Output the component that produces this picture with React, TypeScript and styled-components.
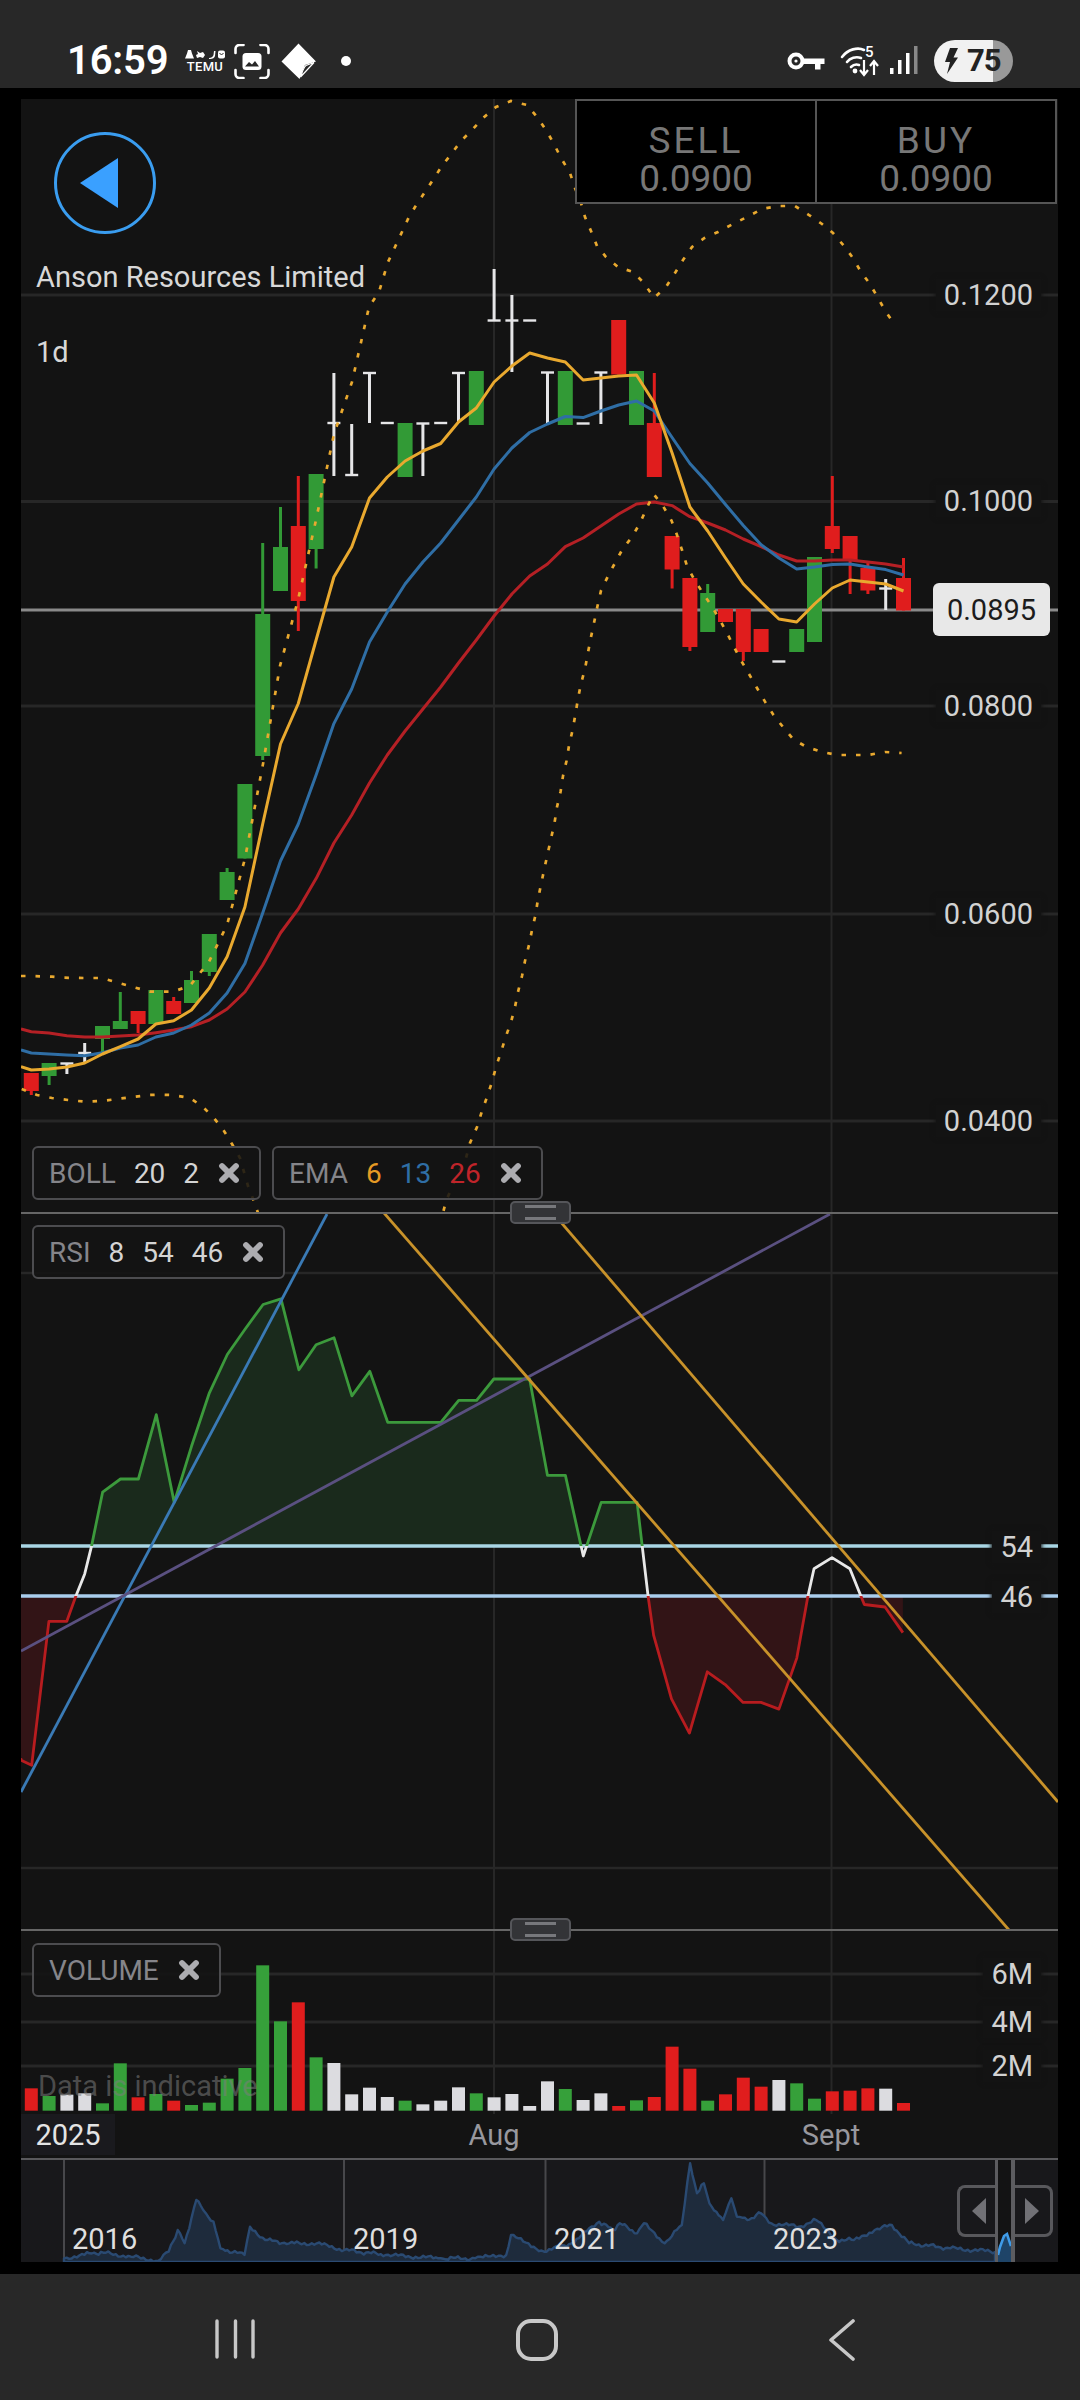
import React from 'react';
import styled, { createGlobalStyle } from 'styled-components';
import { X } from 'lucide-react';

const Global = createGlobalStyle`
  html, body { margin: 0; padding: 0; background: #000; }
  #root { width: 1080px; height: 2400px; }
  * { box-sizing: border-box; }
`;

const FONT = `Roboto, "Liberation Sans", sans-serif`;
const PANEL = '#131313';
const GRID = '#272727';
const ORANGE = '#e9a92f';
const BLUE = '#2f6ea5';
const RED = '#b52025';
const CANDLE_RED = '#e01d1d';
const CANDLE_GREEN = '#329a36';
const WHITE = '#e6e6e8';

const Page = styled.div`
  width: 1080px; height: 2400px; display: flex; flex-direction: column;
  background: #000; font-family: ${FONT}; overflow: hidden;
`;

/* ---------- status bar ---------- */
const StatusBar = styled.header`
  height: 88px; flex: none; background: #282828; display: flex; align-items: center;
  justify-content: space-between; padding: 34px 67px 0 67px; color: #fff;
`;
const StatusGroup = styled.div`display: flex; align-items: center;`;
const Slot = styled.div<{ $ml?: number }>`
  margin-left: ${p => p.$ml ?? 0}px; display: flex; flex-direction: column; align-items: center;
`;
const Time = styled.div`font-size: 40px; font-weight: 600; line-height: 40px; width: 101px; letter-spacing: -0.2px; white-space: nowrap;`;
const TemuText = styled.div`font-size: 13px; font-weight: 500; line-height: 11px; letter-spacing: 0.3px; margin-top: 1px;`;
const Battery = styled.div`
  margin-left: 16px; width: 79px; height: 42px; border-radius: 21px; display: flex; align-items: center;
  padding-left: 11px; gap: 9px; color: #222;
  background: linear-gradient(90deg, #f1f1f1 0, #f1f1f1 59px, #999 59px, #999 100%);
`;
const BatteryText = styled.span`font-size: 31px; font-weight: 700; line-height: 42px; letter-spacing: -1px;`;

/* ---------- chart frame ---------- */
const Frame = styled.main`
  flex: none; height: 2186px; padding: 11px 22px 12px 21px; display: flex; flex-direction: column; background: #000;
`;
const Panel = styled.section<{ $h: number }>`
  position: relative; flex: none; height: ${p => p.$h}px; width: 1037px; background: ${PANEL}; overflow: hidden;
`;
const ChartSvg = styled.svg`display: block; width: 100%; height: 100%;`;
const Divider = styled.div`position: relative; flex: none; height: 2px; width: 1037px; background: #666; z-index: 2;`;
const Handle = styled.div`
  position: absolute; left: 489px; top: -11px; width: 61px; height: 23px; background: #333437;
  border: 2px solid #55565a; border-radius: 5px; display: flex; align-items: center; justify-content: center;
  &::before { content: ''; width: 31px; height: 9px; border-top: 3px solid #77787c; border-bottom: 3px solid #77787c; }
`;

const AxisLabel = styled.div<{ $y: number }>`
  position: absolute; right: 17px; top: ${p => p.$y}px; transform: translateY(-50%);
  font-size: 29px; line-height: 32px; color: #d2d2d2; background: ${PANEL}; padding: 0 8px;
  box-shadow: 0 0 4px 1px ${PANEL};
`;
const LastPrice = styled.div<{ $y: number }>`
  position: absolute; left: 912px; top: ${p => p.$y}px; width: 117px; height: 53px; border-radius: 6px;
  background: #e8e8e8; color: #1c1c1c; font-size: 29px; display: flex; align-items: center; justify-content: center;
`;

const QuoteBox = styled.div`
  position: absolute; right: 1px; top: 0; width: 482px; height: 105px; display: flex; background: #000;
  border: 2px solid #555;
`;
const QuoteCell = styled.div`
  flex: 1; display: flex; flex-direction: column; align-items: center; justify-content: center; padding-top: 16px;
  color: #777; font-size: 37px; line-height: 38px; font-weight: 400;
  & + & { border-left: 2px solid #555; }
`;
const QuoteSide = styled.span`letter-spacing: 3px;`;
const BackButton = styled.div`
  position: absolute; left: 33px; top: 33px; width: 102px; height: 102px; border-radius: 50%;
  border: 3px solid #3a9df0; display: flex; align-items: center; justify-content: center;
`;
const BackArrow = styled.svg`display: block; margin-right: 12px;`;
const Title = styled.div<{ $y: number }>`
  position: absolute; left: 15px; top: ${p => p.$y}px; transform: translateY(-50%);
  font-size: 29px; line-height: 34px; color: #d8d8d8; white-space: nowrap;
`;

const ChipRow = styled.div<{ $y: number }>`
  position: absolute; left: 11px; top: ${p => p.$y}px; display: flex; gap: 11px;
`;
const Chip = styled.div`
  height: 54px; display: flex; align-items: center; gap: 18px; padding: 0 16px 0 15px;
  border: 2px solid #4c4c4f; border-radius: 6px; background: rgba(19, 19, 19, 0.88);
  font-size: 28px; color: #d4d4d4; white-space: nowrap;
`;
const ChipName = styled.span`color: #85858a;`;
const ChipValue = styled.span<{ $c?: string }>`color: ${p => p.$c ?? '#d4d4d4'};`;
const ChipClose = styled(X).attrs({ size: 28, strokeWidth: 5 })`color: #acacb0; margin-left: -2px;`;

const Indicative = styled.div`
  position: absolute; left: 17px; top: 139px; font-size: 29px; line-height: 32px; color: rgba(125, 125, 125, 0.55); white-space: nowrap;
`;

const TimeAxis = styled.div`
  position: relative; flex: none; height: 44px; width: 1037px; background: ${PANEL}; overflow: hidden;
`;
const YearCell = styled.div`
  position: absolute; left: 0; top: 0; width: 94px; height: 41px; background: #1a1a1e;
`;
const TimeLabel = styled.div<{ $x: number; $c: string }>`
  position: absolute; left: ${p => p.$x}px; top: 5px; transform: translateX(-50%);
  font-size: 29px; line-height: 32px; color: ${p => p.$c};
`;

const Navigator = styled.div`
  position: relative; flex: none; height: 104px; width: 1037px; background: #18181b; border-top: 2px solid #59595c; overflow: hidden;
`;
const NavYear = styled.div<{ $x: number }>`
  position: absolute; left: ${p => p.$x}px; top: 63px; font-size: 29px; line-height: 32px; color: #dfdfdf;
`;
const NavHandle = styled.div<{ $left: number; $side: 'l' | 'r' }>`
  position: absolute; left: ${p => p.$left}px; top: 25px; width: 40px; height: 52px;
  border: 3px solid #58585c; display: flex; align-items: center; justify-content: center;
  ${p => p.$side === 'l' ? 'border-right: none; border-radius: 8px 0 0 8px;' : 'border-left: none; border-radius: 0 8px 8px 0;'}
`;
const NavWindow = styled.div`
  position: absolute; left: 974px; top: -2px; width: 20px; height: 106px;
  border-left: 3px solid #5c5c60; border-right: 4px solid #5c5c60; background: rgba(19, 19, 19, 0.92);
`;
const NavWindowSvg = styled.svg`display: block; width: 100%; height: 100%;`;

/* ---------- navigation bar ---------- */
const NavBar = styled.nav`
  flex: none; height: 126px; background: #282828; display: flex; align-items: flex-start; padding: 45px 0 0 215px;
`;
const NavIcon = styled.svg<{ $mr: number }>`display: block; flex: none; margin-right: ${p => p.$mr}px;`;

/* ---------- data ---------- */
const X0 = 31.3;
const STEP = 17.8;
const cx = (i: number) => X0 + STEP * i;

type Candle = { c: 'g' | 'r'; t: number; b: number; h?: number; l?: number } | { c: 'w'; bar: number; h?: number; l?: number };
const candles: Candle[] = [
  { c: 'r', t: 1073, b: 1091, l: 1095 },
  { c: 'g', t: 1063, b: 1076, l: 1085 },
  { c: 'w', bar: 1063.5, h: 1063, l: 1074 },
  { c: 'w', bar: 1053, h: 1043, l: 1063 },
  { c: 'g', t: 1026, b: 1039, l: 1052 },
  { c: 'g', t: 1021, b: 1029, h: 992 },
  { c: 'r', t: 1011, b: 1024, l: 1033 },
  { c: 'g', t: 990, b: 1024 },
  { c: 'r', t: 1001, b: 1014, h: 997 },
  { c: 'g', t: 980, b: 1003, h: 971 },
  { c: 'g', t: 934, b: 972, l: 976 },
  { c: 'g', t: 872, b: 900, h: 868 },
  { c: 'g', t: 784, b: 858.5 },
  { c: 'g', t: 614, b: 756, h: 543, l: 760 },
  { c: 'g', t: 547, b: 591, h: 507 },
  { c: 'r', t: 526, b: 601, h: 476, l: 631 },
  { c: 'g', t: 474, b: 549, l: 568.5 },
  { c: 'w', bar: 423, h: 373, l: 476 },
  { c: 'w', bar: 475, h: 424, l: 476 },
  { c: 'w', bar: 373, h: 372, l: 423 },
  { c: 'w', bar: 423 },
  { c: 'g', t: 423, b: 477 },
  { c: 'w', bar: 423.5, h: 423, l: 476 },
  { c: 'w', bar: 423 },
  { c: 'w', bar: 373, h: 372, l: 423 },
  { c: 'g', t: 371, b: 425 },
  { c: 'w', bar: 320.5, h: 269, l: 321 },
  { c: 'w', bar: 320.5, h: 295, l: 372 },
  { c: 'w', bar: 320.5 },
  { c: 'w', bar: 372.5, h: 372, l: 423 },
  { c: 'g', t: 371, b: 425 },
  { c: 'w', bar: 423.5 },
  { c: 'w', bar: 372.5, h: 372, l: 424 },
  { c: 'r', t: 320, b: 374.5 },
  { c: 'g', t: 371, b: 425 },
  { c: 'r', t: 423, b: 477, h: 373 },
  { c: 'r', t: 536, b: 569.5, l: 588.5 },
  { c: 'r', t: 578, b: 647, l: 651 },
  { c: 'g', t: 593, b: 632, h: 584 },
  { c: 'r', t: 609, b: 622 },
  { c: 'r', t: 609, b: 652, l: 661 },
  { c: 'r', t: 629, b: 652 },
  { c: 'w', bar: 661.5 },
  { c: 'g', t: 629, b: 652 },
  { c: 'g', t: 557, b: 642 },
  { c: 'r', t: 526, b: 549, h: 476, l: 553 },
  { c: 'r', t: 536, b: 561, l: 594 },
  { c: 'r', t: 568, b: 590.5, h: 563, l: 594 },
  { c: 'w', bar: 588.5, h: 579, l: 610 },
  { c: 'r', t: 578, b: 610.5, h: 558 },
];

const ema6 = [1070, 1069, 1067, 1063, 1054, 1046.7, 1039, 1024, 1020.7, 1010, 988, 956.7, 907, 824, 744, 703.5, 640, 577, 547, 498, 477, 461, 451, 443.5, 422, 408, 382, 366, 353, 358, 362, 380, 378, 376, 375, 403, 453, 507, 531, 558, 584, 602, 619, 622, 604, 588, 580, 582, 584, 591];
const ema13 = [1053, 1054, 1055, 1055.7, 1052.7, 1048, 1045, 1037, 1033, 1025, 1013, 993, 963.5, 913, 861, 824, 775, 723.6, 689, 642, 612, 584, 562, 543, 520, 497, 469, 448, 432.5, 424, 416.5, 417.6, 411, 405, 401, 411, 437.5, 463.5, 483, 504.5, 525.5, 544.7, 558, 569, 567, 564.6, 564, 567, 569.6, 575];
const ema26 = [1031.7, 1033, 1035.7, 1037, 1037, 1036, 1035, 1032.7, 1030, 1026.7, 1020, 1009, 992, 965, 933, 909, 878.6, 843, 815, 783, 755, 731, 709, 687, 663, 640, 616, 594, 576, 564, 546.6, 538, 526, 514, 504, 502, 505.6, 516.7, 523, 530, 539, 546.6, 555, 561, 561, 560, 560, 562, 564, 567];
const emaPts = (a: number[], y0: number) => `21,${y0} ` + a.map((y, i) => `${cx(i).toFixed(1)},${y}`).join(' ');

const bollUpper = '21,976 31,976 52,976.7 63,977.7 85,978 102,978 118,982.7 133,987 150,991.7 173,991.7 190,985.7 209,961.7 227,925 245,858.5 263,764 280,666 298,600 316,520 334,434 352,382 369,307 379,292 388,262 395,247 408,219 415,207 425,192 442,166 452,153 461,141 472,130 483,118 496,107 511,101 527,105 537,117 546,130 554,144 561,158 570,173 575,188 581,203 585,217 591,231 597,246 606,257 618,267 633,272 644,283 654,298 666,287 675,273 683,260 692,247 704.5,238 718,232 733,224 747,217 762,209 778,206 795,206 809,215 822,224 833,233 844,246 853,258 861,272 870,284 878,298 886,312 895,325';
const bollLower = '21.7,1089 37,1095 52,1098 68,1100 85,1101.7 102,1101 117,1099 133,1097 148,1095 157,1094.7 173,1095 190,1098 203,1107 214,1118 224,1131 232,1144 240,1158 248,1186 255,1204 262,1225';
const bollLower2 = '440,1225 446,1201 456,1178 466,1158 470,1143 477,1127 482,1111 487,1097 492,1082 496,1067 501,1052 506,1036 511,1022 515,1007 518,992 522,976 525,961 529,945 532,930 535.5,915 538,899 544.5,868 551,838.6 554.5,823 557,807 560.6,791.5 563,776 566.5,761 569,745.6 572.7,729.5 575.5,714 578,698.5 581,683.6 585,669 588,652.6 591,637 594.4,621 597.5,606 601,590.6 608,576 615,563 622.6,549 632,537 640,523 647,507.6 653.6,494 663,506 671.5,520.6 677,535 682,550 687,566 694,579 702.5,592.5 711,605 719,618.5 727,633 734,647 741.4,661 749,674 757,688 765,701.6 773.5,715 783,727 793,739 806,746.7 821,751.7 837,755 852.7,755 868,755 885,752 901.6,753';

const rsiRaw: [number, number][] = [[30,1235],[46,1245],[71,963],[97,963],[110,914],[123,870],[133,815],[149,710],[175,684],[201,684],[227,558],[253,730],[278,620],[304,515],[330,440],[356,390],[382,342],[408,331],[434,470],[459,421],[485,407],[511,521],[537,473],[563,573],[640,573],[666,530],[692,530],[717,488],[769,488],[795,677],[821,677],[847,835],[873,730],[925,730],[941,914],[949,990],[975,1115],[1001,1182],[1027,1062],[1053,1087],[1079,1122],[1105,1122],[1131,1135],[1157,1035],[1173,914],[1182,860],[1208,838],[1234,860],[1255,930],[1285,935],[1311,985]];
const rsi = rsiRaw.map(([x, y]) => [+(x / 1.452).toFixed(1), +(1130 + y / 1.96).toFixed(1)] as [number, number]);
const rsiPts = rsi.map(p => p.join(',')).join(' ');
const rsiLastX = rsi[rsi.length - 1][0];
const rsiFirstX = rsi[0][0];
const L54 = 1546;
const L46 = 1596;

const volTops: [string, number][] = [['r',565],['g',588],['w',584],['w',580],['g',610],['g',490],['r',592],['g',582],['r',602],['g',615],['g',608],['g',536],['g',504],['g',196],['g',364],['r',307],['g',472],['w',489],['w',583],['w',563],['w',591],['g',602],['w',613],['w',602],['w',562],['g',580],['w',592],['w',582],['w',618],['w',544],['g',567],['w',600],['w',580],['r',618],['g',601],['r',591],['r',440],['r',506],['g',602],['r',583],['r',533],['r',560],['w',540],['g',550],['g',596],['r',574],['r',572],['r',565],['w',566],['r',609]];
const volFill: Record<string, string> = { r: '#e01d1d', g: '#36a03a', w: '#dcdce0' };

const areaRaw: [number, number][] = [[93,1075],[130,1060],[150,1058],[190,1070],[230,1082],[245,1055],[258,990],[268,1030],[285,900],[295,930],[310,965],[320,1045],[355,1065],[363,980],[385,1020],[420,1030],[460,1030],[500,1050],[560,1065],[640,1075],[690,1075],[735,1065],[742,1005],[760,1025],[790,1055],[830,1030],[870,965],[890,990],[900,970],[925,1000],[935,970],[965,1030],[990,975],[1002,790],[1012,880],[1022,850],[1030,910],[1050,960],[1062,895],[1070,950],[1085,960],[1105,940],[1120,970],[1160,980],[1185,960],[1215,1020],[1240,1020],[1270,990],[1295,975],[1320,1030],[1380,1045],[1445,1055]];
const areaPts = (() => {
  const out: string[] = [];
  for (let i = 0; i < areaRaw.length - 1; i++) {
    const [x1, y1] = areaRaw[i];
    const [x2, y2] = areaRaw[i + 1];
    const px1 = x1 / 1.452, px2 = x2 / 1.452;
    const py1 = 1900 + y1 / 3, py2 = 1900 + y2 / 3;
    const n = Math.max(1, Math.round((px2 - px1) / 2.5));
    for (let k = 0; k < n; k++) {
      const t = k / n;
      const x = px1 + (px2 - px1) * t;
      const noise = k === 0 ? 0 : Math.sin(x * 2.3) * 1.2 + Math.sin(x * 0.9 + 1) * 1.1;
      out.push(`${x.toFixed(1)},${(py1 + (py2 - py1) * t + noise).toFixed(1)}`);
    }
  }
  out.push('995,2252');
  return out.join(' ');
})();

/* ---------- drawings ---------- */
const CandleMark: React.FC<{ d: Candle; i: number }> = ({ d, i }) => {
  const x = cx(i);
  if (d.c === 'w') {
    return (
      <g fill={WHITE}>
        {d.h !== undefined && <rect x={x - 1.5} y={d.h} width={3} height={(d.l ?? d.h) - d.h} />}
        <rect x={x - 6.5} y={d.bar - 1.2} width={13} height={2.4} />
      </g>
    );
  }
  const fill = d.c === 'g' ? CANDLE_GREEN : CANDLE_RED;
  const hi = d.h ?? d.t;
  const lo = d.l ?? d.b;
  return (
    <g fill={fill}>
      <rect x={x - 1.5} y={hi} width={3} height={lo - hi} />
      <rect x={x - 7.5} y={d.t} width={15} height={d.b - d.t} />
    </g>
  );
};

const Rules: React.FC<{ top: number; bottom: number; rows: number[]; w?: number }> = ({ top, bottom, rows, w = 3 }) => (
  <g stroke={GRID}>
    {rows.map(y => <line key={y} x1={21} x2={1058} y1={y} y2={y} strokeWidth={w} />)}
    <line x1={494} x2={494} y1={top} y2={bottom} strokeWidth={2} />
    <line x1={831.5} x2={831.5} y1={top} y2={bottom} strokeWidth={2} />
  </g>
);

const PriceChart = () => (
  <ChartSvg viewBox="21 99 1037 1113" preserveAspectRatio="none">
    <Rules top={99} bottom={1212} rows={[295, 501.5, 706, 914, 1121]} />
    <line x1={21} x2={1058} y1={610} y2={610} stroke="#8a8a8a" strokeWidth={3} />
    {candles.map((d, i) => <CandleMark key={i} d={d} i={i} />)}
    <g fill="none" strokeWidth={3} strokeLinejoin="round">
      <polyline points={emaPts(ema26, 1029)} stroke={RED} />
      <polyline points={emaPts(ema13, 1050)} stroke={BLUE} />
      <polyline points={emaPts(ema6, 1066.7)} stroke={ORANGE} />
    </g>
    <g fill="none" stroke={ORANGE} strokeWidth={2.7} strokeDasharray="4.5 10">
      <polyline points={bollUpper} />
      <polyline points={bollLower} />
      <polyline points={bollLower2} />
    </g>
  </ChartSvg>
);

const RsiChart = () => (
  <ChartSvg viewBox="21 1214 1037 715" preserveAspectRatio="none">
    <defs>
      <clipPath id="above"><rect x={21} y={1214} width={1037} height={L54 - 1214} /></clipPath>
      <clipPath id="mid"><rect x={21} y={L54} width={1037} height={L46 - L54} /></clipPath>
      <clipPath id="below"><rect x={21} y={L46} width={1037} height={400} /></clipPath>
    </defs>
    <Rules top={1214} bottom={1929} rows={[1273, 1868]} w={2.5} />
    <polygon points={`${rsiFirstX},${L54} ${rsiPts} ${rsiLastX},${L54}`} fill="#1a2a1c" clipPath="url(#above)" />
    <polygon points={`21,${L46} 21,1760 ${rsiPts} ${rsiLastX},${L46}`} fill="#321416" clipPath="url(#below)" />
    <line x1={21} x2={1058} y1={L54} y2={L54} stroke="#a9d6e4" strokeWidth={3.4} />
    <line x1={21} x2={1058} y1={L46} y2={L46} stroke="#a9cdec" strokeWidth={3.4} />
    <g fill="none" strokeWidth={2.8} strokeLinejoin="round">
      <polyline points={rsiPts} stroke="#3c9a3c" clipPath="url(#above)" />
      <polyline points={rsiPts} stroke="#e8e8e8" clipPath="url(#mid)" />
      <polyline points={`21,1758 ${rsiPts}`} stroke="#b81c1f" clipPath="url(#below)" />
    </g>
    <g fill="none" strokeWidth={2.8}>
      <line x1={21} y1={1792} x2={327} y2={1214} stroke="#3a7ab5" />
      <line x1={21} y1={1651} x2={830} y2={1214} stroke="#5a5080" />
      <line x1={384} y1={1213} x2={1009} y2={1930} stroke="#c8922a" />
      <line x1={553} y1={1213} x2={1058} y2={1802} stroke="#c8922a" />
    </g>
  </ChartSvg>
);

const VolumeChart = () => (
  <ChartSvg viewBox="21 1931 1037 183" preserveAspectRatio="none">
    <Rules top={1931} bottom={2114} rows={[1974, 2022, 2066]} />
    {volTops.map(([c, t], i) => {
      const y = 1900 + t / 3;
      return <rect key={i} x={cx(i) - 6.5} y={y} width={13} height={2110.7 - y} fill={volFill[c]} />;
    })}
  </ChartSvg>
);

const NavArea = () => (
  <ChartSvg viewBox="21 2160 1037 102" preserveAspectRatio="none">
    <g stroke="#47474b" strokeWidth={2}>
      {[64, 344, 545.5, 764.5].map(x => <line key={x} x1={x} x2={x} y1={2160} y2={2262} />)}
    </g>
    <polygon points={`64,2262 ${areaPts} 995,2262`} fill="#1e2b3c" stroke="#2a4a72" strokeWidth={2.4} strokeLinejoin="round" />
  </ChartSvg>
);

const Triangle: React.FC<{ dir: 'l' | 'r' }> = ({ dir }) => (
  <svg width="14" height="26" viewBox="0 0 14 26">
    <polygon points={dir === 'l' ? '14,0 14,26 0,13' : '0,0 0,26 14,13'} fill="#717176" />
  </svg>
);

const TemuGlyphs = () => (
  <svg width="40" height="10" viewBox="0 0 40 10" fill="#fff">
    <path d="M3 0h3l1 3.5 2 5H0l2-5z" />
    <path d="M12 1l3 2 3-1 2 3-2 3-3-1-3 1-1-3 2-1z" />
    <path d="M24 8c2 0 4-1 4.5-3l.5-4h1.5l-.5 5c-.5 2-3 3.5-6 3z" />
    <rect x="33" y="0.5" width="7" height="8" rx="2" />
    <path d="M34.5 3l2 2 2-2" stroke="#282828" strokeWidth="1" fill="none" />
  </svg>
);

const ScreenshotIcon = () => (
  <svg width="36" height="35" viewBox="0 0 36 35" fill="none">
    <g stroke="#fff" strokeWidth="2.6" strokeLinecap="round">
      <path d="M1.5 9V5a4 4 0 0 1 4-4h4" />
      <path d="M26.5 1h4a4 4 0 0 1 4 4v4" />
      <path d="M1.5 26v4a4 4 0 0 0 4 4h4" />
      <path d="M26.5 34h4a4 4 0 0 0 4-4v-4" />
    </g>
    <rect x="8.5" y="9" width="19" height="17" rx="3.5" fill="#fff" />
    <path d="M11 22.5l4-4.5 3 2.5 3-3.5 4 5.5z" fill="#282828" />
  </svg>
);

const DiamondIcon = () => (
  <svg width="36" height="37" viewBox="0 0 36 37">
    <path d="M17.5 0.5L35 18.5 24 22 18.5 36 0.5 18.5z" fill="#fff" />
    <path d="M33 19.5L19.5 34c2-5 2.5-9 5.5-11.5z" fill="#282828" stroke="#fff" strokeWidth="1.2" />
  </svg>
);

const KeyIcon = () => (
  <svg width="38" height="20" viewBox="0 0 38 20" fill="none">
    <circle cx="9" cy="10" r="6.5" stroke="#fff" strokeWidth="4" />
    <circle cx="9" cy="10" r="1.6" fill="#fff" />
    <path d="M16 7.5h21.5V13H33.5v5.5H28V13H16z" fill="#fff" />
  </svg>
);

const WifiIcon = () => (
  <svg width="42" height="34" viewBox="0 0 42 34" fill="none">
    <g stroke="#fff" strokeLinecap="round" strokeWidth="2.6">
      <path d="M2 13C8 5 18 3 24 6" />
      <path d="M7 18c3-4 9-6 14-4" />
      <path d="M11 23c2-2 5-3 8-2" />
    </g>
    <circle cx="15" cy="27" r="2.4" fill="#fff" />
    <text x="25" y="13" fill="#fff" fontSize="15" fontWeight="500" fontFamily="Roboto, sans-serif">5</text>
    <g stroke="#fff" strokeWidth="2.2">
      <path d="M24 16v14M20 26l4 5 4-5" />
      <path d="M34 31V18M30 22l4-5 4 5" />
    </g>
  </svg>
);

const SignalIcon = () => (
  <svg width="28" height="30" viewBox="0 0 28 30">
    <rect x="0" y="22" width="3.5" height="6" fill="#fff" />
    <rect x="8" y="14" width="3.5" height="14" fill="#fff" />
    <rect x="16" y="7" width="3.5" height="21" fill="#fff" />
    <rect x="24" y="0" width="3.5" height="28" fill="#888" />
  </svg>
);

const BoltIcon = () => (
  <svg width="13" height="26" viewBox="0 0 13 26">
    <path d="M5 0h8L8.5 9.5H13L2 26l3-12H0z" fill="#222" />
  </svg>
);

const App = () => (
  <Page>
    <Global />
    <StatusBar>
      <StatusGroup>
        <Time>16:59</Time>
        <Slot $ml={17}><TemuGlyphs /><TemuText>TEMU</TemuText></Slot>
        <Slot $ml={9}><ScreenshotIcon /></Slot>
        <Slot $ml={11}><DiamondIcon /></Slot>
        <Slot $ml={24}>
          <svg width="10" height="10" viewBox="0 0 10 10"><circle cx="5" cy="5" r="5" fill="#fff" /></svg>
        </Slot>
      </StatusGroup>
      <StatusGroup>
        <KeyIcon />
        <Slot $ml={15}><WifiIcon /></Slot>
        <Slot $ml={8}><SignalIcon /></Slot>
        <Battery>
          <BoltIcon />
          <BatteryText>75</BatteryText>
        </Battery>
      </StatusGroup>
    </StatusBar>

    <Frame>
      <Panel $h={1113}>
        <PriceChart />
        <QuoteBox>
          <QuoteCell><QuoteSide>SELL</QuoteSide><span>0.0900</span></QuoteCell>
          <QuoteCell><QuoteSide>BUY</QuoteSide><span>0.0900</span></QuoteCell>
        </QuoteBox>
        <BackButton>
          <BackArrow width="38" height="50" viewBox="0 0 38 50">
            <polygon points="38,0 38,50 0,25" fill="#3aa0ff" />
          </BackArrow>
        </BackButton>
        <Title $y={178}>Anson Resources Limited</Title>
        <Title $y={253}>1d</Title>
        <AxisLabel $y={196}>0.1200</AxisLabel>
        <AxisLabel $y={402}>0.1000</AxisLabel>
        <AxisLabel $y={607}>0.0800</AxisLabel>
        <AxisLabel $y={815}>0.0600</AxisLabel>
        <AxisLabel $y={1022}>0.0400</AxisLabel>
        <LastPrice $y={484}>0.0895</LastPrice>
        <ChipRow $y={1047}>
          <Chip>
            <ChipName>BOLL</ChipName>
            <ChipValue>20</ChipValue>
            <ChipValue>2</ChipValue>
            <ChipClose />
          </Chip>
          <Chip>
            <ChipName>EMA</ChipName>
            <ChipValue $c="#e59a24">6</ChipValue>
            <ChipValue $c="#2f6ea5">13</ChipValue>
            <ChipValue $c="#c0242a">26</ChipValue>
            <ChipClose />
          </Chip>
        </ChipRow>
      </Panel>
      <Divider><Handle /></Divider>
      <Panel $h={715}>
        <RsiChart />
        <ChipRow $y={11}>
          <Chip>
            <ChipName>RSI</ChipName>
            <ChipValue>8</ChipValue>
            <ChipValue>54</ChipValue>
            <ChipValue>46</ChipValue>
            <ChipClose />
          </Chip>
        </ChipRow>
        <AxisLabel $y={333}>54</AxisLabel>
        <AxisLabel $y={383}>46</AxisLabel>
      </Panel>
      <Divider><Handle /></Divider>
      <Panel $h={183}>
        <VolumeChart />
        <ChipRow $y={12}>
          <Chip>
            <ChipName>VOLUME</ChipName>
            <ChipClose />
          </Chip>
        </ChipRow>
        <Indicative>Data is indicative</Indicative>
        <AxisLabel $y={43}>6M</AxisLabel>
        <AxisLabel $y={91}>4M</AxisLabel>
        <AxisLabel $y={135}>2M</AxisLabel>
      </Panel>
      <TimeAxis>
        <YearCell />
        <TimeLabel $x={47} $c="#e4e4e4">2025</TimeLabel>
        <TimeLabel $x={473} $c="#98989e">Aug</TimeLabel>
        <TimeLabel $x={810} $c="#98989e">Sept</TimeLabel>
      </TimeAxis>
      <Navigator>
        <NavArea />
        <NavYear $x={51}>2016</NavYear>
        <NavYear $x={332}>2019</NavYear>
        <NavYear $x={533}>2021</NavYear>
        <NavYear $x={752}>2023</NavYear>
        <NavHandle $left={936} $side="l"><Triangle dir="l" /></NavHandle>
        <NavHandle $left={992} $side="r"><Triangle dir="r" /></NavHandle>
        <NavWindow>
          <NavWindowSvg viewBox="0 0 13 106" preserveAspectRatio="none">
            <polygon points="0,97 2,89 6,78 9,76 13,88 13,106 0,106" fill="#1e4468" />
            <polyline points="0,97 2,89 6,78 9,76 13,88" fill="none" stroke="#3f9be8" strokeWidth="2.6" />
          </NavWindowSvg>
        </NavWindow>
      </Navigator>
    </Frame>

    <NavBar>
      <NavIcon $mr={261} width="40" height="40" viewBox="0 0 40 40" fill="none" stroke="#c8c8c8" strokeWidth="3.4" strokeLinecap="round">
        <path d="M2 2v36M20.5 2v36M38 2v36" />
      </NavIcon>
      <NavIcon $mr={271} width="42" height="42" viewBox="0 0 42 42" fill="none" stroke="#c8c8c8" strokeWidth="4">
        <rect x="2" y="2" width="38" height="38" rx="13" />
      </NavIcon>
      <NavIcon $mr={0} width="26" height="42" viewBox="0 0 26 42" fill="none" stroke="#c8c8c8" strokeWidth="3.6" strokeLinecap="round" strokeLinejoin="round">
        <path d="M24 2L2 21l22 19" />
      </NavIcon>
    </NavBar>
  </Page>
);

export default App;
